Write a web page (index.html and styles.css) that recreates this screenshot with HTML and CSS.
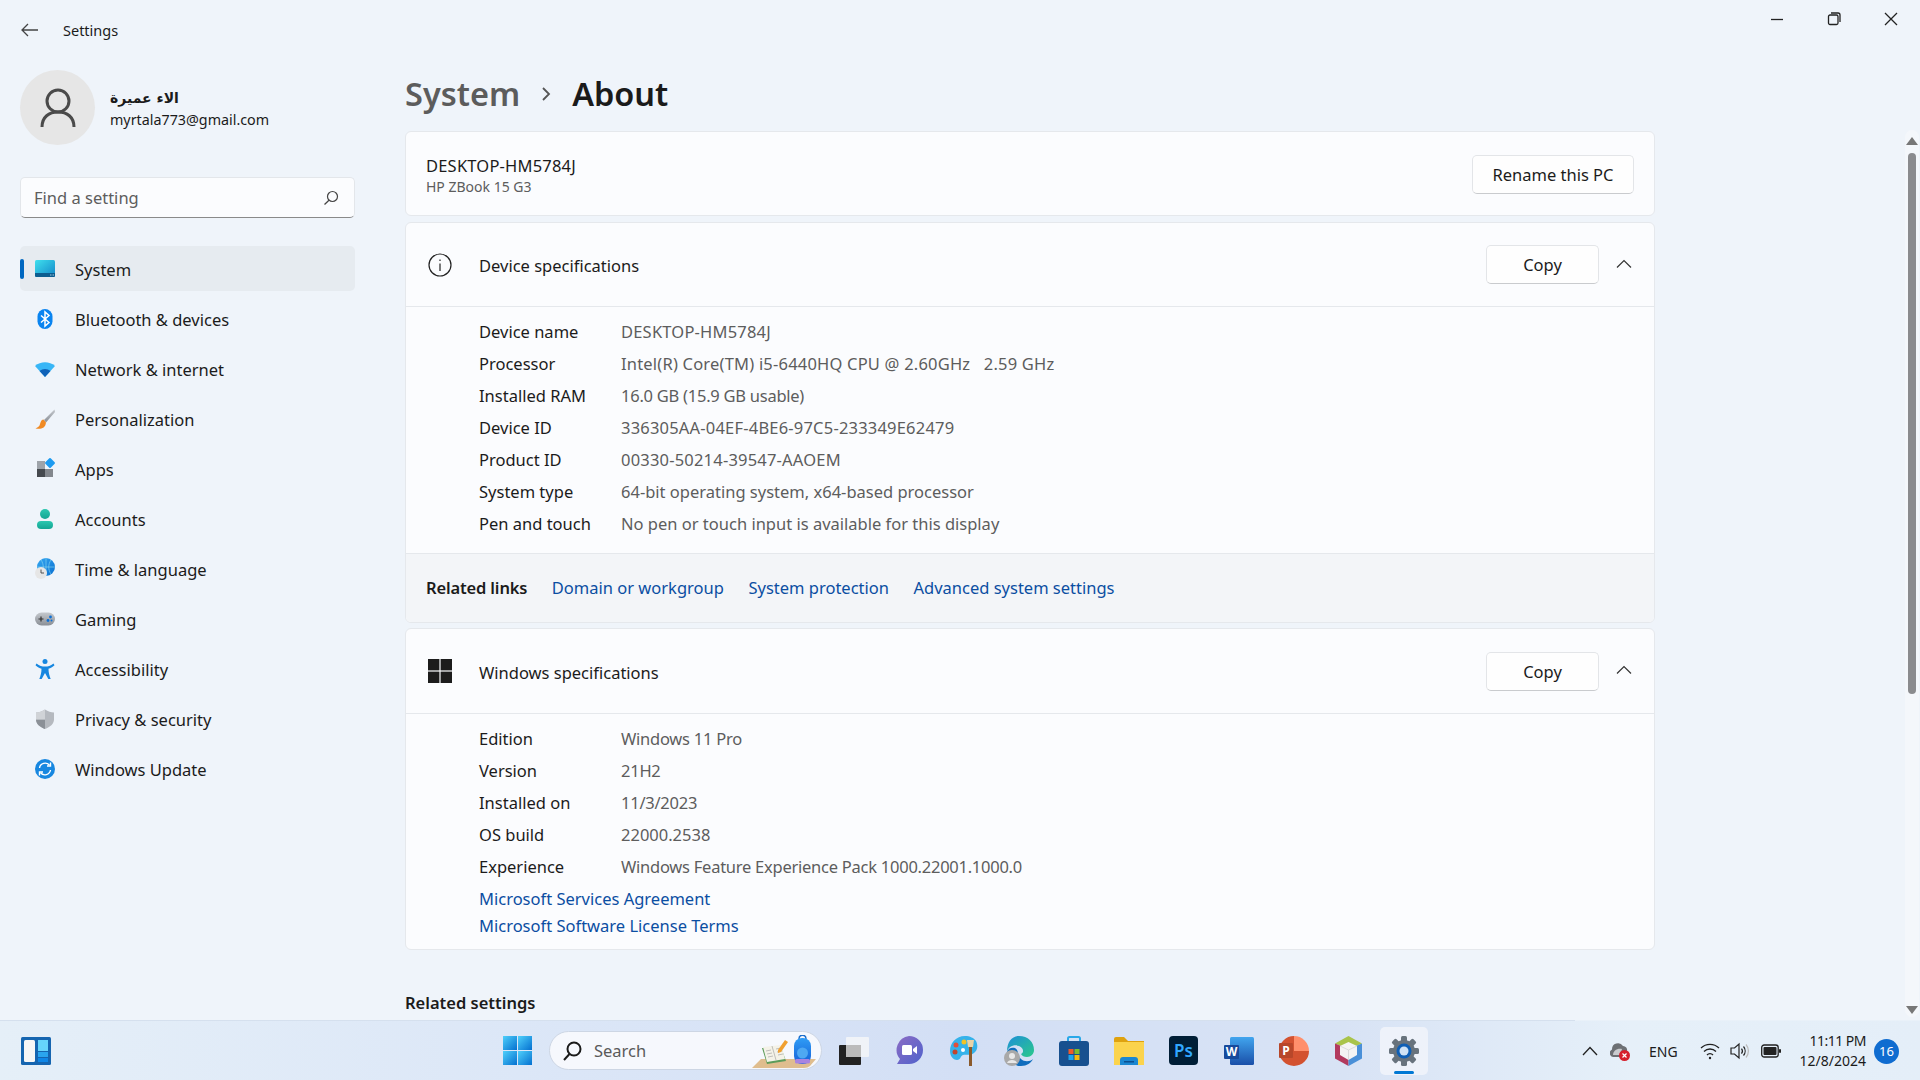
FILE: index.html
```html
<!DOCTYPE html>
<html lang="en">
<head>
  <meta charset="UTF-8" />
  <title>Settings</title>
  <link rel="stylesheet" href="styles.css">
</head>
<body>
  <svg class="defs" width="0" height="0">
    <defs>
      <linearGradient id="g-screen" x1="0" y1="0" x2="1" y2="1"><stop offset="0" stop-color="#3fe0ee"/><stop offset="1" stop-color="#1286c8"/></linearGradient>
      <linearGradient id="g-blue" x1="0" y1="0" x2="1" y2="1"><stop offset="0" stop-color="#35a8f2"/><stop offset="1" stop-color="#0a6fd0"/></linearGradient>
      <linearGradient id="g-win" x1="0" y1="0" x2="1" y2="1"><stop offset="0" stop-color="#4fd0fb"/><stop offset="1" stop-color="#0470d0"/></linearGradient>
      <linearGradient id="g-teal" x1="0" y1="0" x2="0" y2="1"><stop offset="0" stop-color="#2cc7b0"/><stop offset="1" stop-color="#14a593"/></linearGradient>
      <linearGradient id="g-gray" x1="0" y1="0" x2="0" y2="1"><stop offset="0" stop-color="#c4c8cd"/><stop offset="1" stop-color="#8a8f96"/></linearGradient>
      <linearGradient id="g-teams" x1="0" y1="0" x2="1" y2="1"><stop offset="0" stop-color="#8c6cc4"/><stop offset="1" stop-color="#4f62cc"/></linearGradient>
      <linearGradient id="g-edge" x1="0" y1="0" x2="1" y2="1"><stop offset="0" stop-color="#1d8fd8"/><stop offset="1" stop-color="#2bc98a"/></linearGradient>
      <linearGradient id="g-word" x1="0" y1="0" x2="0" y2="1"><stop offset="0" stop-color="#41a5ee"/><stop offset="1" stop-color="#1a4fa8"/></linearGradient>
      <linearGradient id="g-pack" x1="0" y1="0" x2="0" y2="1"><stop offset="0" stop-color="#2f9cf5"/><stop offset="1" stop-color="#1560d8"/></linearGradient>
    </defs>
  </svg>

  <div class="window">
    <header class="titlebar">
      <div class="titlebar-left">
        <svg class="back" width="18" height="14" viewBox="0 0 18 14" fill="none" stroke="#444" stroke-width="1.3"><path d="M1 7h16M7 1 1 7l6 6"/></svg>
        <span class="app-name">Settings</span>
      </div>
      <div class="win-controls">
        <span class="win-btn"><svg width="14" height="14" viewBox="0 0 14 14" stroke="#222" stroke-width="1.3" fill="none"><path d="M1 7.5h12"/></svg></span>
        <span class="win-btn"><svg width="14" height="14" viewBox="0 0 14 14" stroke="#222" stroke-width="1.3" fill="none"><rect x="1.5" y="3" width="9.5" height="9.5" rx="1.5"/><path d="M4 1h7a2 2 0 0 1 2 2v7"/></svg></span>
        <span class="win-btn"><svg width="14" height="14" viewBox="0 0 14 14" stroke="#222" stroke-width="1.3" fill="none"><path d="M1 1l12 12M13 1 1 13"/></svg></span>
      </div>
    </header>

    <div class="columns">
      <aside class="sidebar">
        <div class="profile">
          <div class="avatar">
            <svg width="36" height="40" viewBox="0 0 36 40" fill="none" stroke="#4a4a4a" stroke-width="3"><circle cx="18" cy="13" r="11"/><path d="M2 39c0-10 7-15 16-15s16 5 16 15"/></svg>
          </div>
          <div class="profile-text">
            <div class="profile-name" dir="rtl">الاء عميرة</div>
            <div class="profile-mail">myrtala773@gmail.com</div>
          </div>
        </div>

        <div class="search-box">
          <span>Find a setting</span>
          <svg width="16" height="16" viewBox="0 0 16 16" fill="none" stroke="#444" stroke-width="1.2"><circle cx="9.5" cy="6.5" r="5"/><path d="M6 10.2 1.5 14.5"/></svg>
        </div>

        <nav class="nav">
          <a class="nav-item active">
            <svg class="nav-icon" viewBox="0 0 24 24"><rect x="2" y="3" width="20" height="17" rx="1.5" fill="url(#g-screen)"/><path d="M2 16h20v2.5a1.5 1.5 0 0 1-1.500 1.500H3.500A1.500 1.500 0 0 1 2 18.500z" fill="#0c5d8f"/><path d="M17 18h1.500M19.500 18H21" stroke="#cfeaf5" stroke-width=".8"/></svg>
            <span>System</span>
          </a>
          <a class="nav-item">
            <svg class="nav-icon" viewBox="0 0 24 24"><rect x="4.500" y="2" width="15" height="20" rx="7.500" fill="#0a84f0"/><path d="M8 8.500l8 7-4 3.500V5l4 3.500-8 7" fill="none" stroke="#fff" stroke-width="1.500"/></svg>
            <span>Bluetooth &amp; devices</span>
          </a>
          <a class="nav-item">
            <svg class="nav-icon" viewBox="0 0 24 24"><path d="M2 9c5.500-5 14.500-5 20 0l-10 11z" fill="#38b6f6"/><path d="M6.500 14c3-2.800 8-2.800 11 0L12 20z" fill="#0f62b8"/></svg>
            <span>Network &amp; internet</span>
          </a>
          <a class="nav-item">
            <svg class="nav-icon" viewBox="0 0 24 24"><path d="M21.500 2.500 11 13l2 2.500L22 5z" fill="url(#g-gray)"/><path d="M10.500 12.500c-3 .5-3 4-4 6-.5 1-2 2-4 3 5 1 10 0 10.500-6z" fill="#f08a24"/></svg>
            <span>Personalization</span>
          </a>
          <a class="nav-item">
            <svg class="nav-icon" viewBox="0 0 24 24"><rect x="4" y="4" width="8" height="8" fill="#9ea3a9"/><rect x="4" y="12" width="8" height="8" fill="#45494e"/><rect x="12" y="12" width="8" height="8" fill="#83878d"/><rect x="13.200" y="2.200" width="7.600" height="7.600" rx="1" transform="rotate(45 17 6)" fill="#1e9bf0"/></svg>
            <span>Apps</span>
          </a>
          <a class="nav-item">
            <svg class="nav-icon" viewBox="0 0 24 24"><circle cx="12" cy="7" r="5" fill="url(#g-teal)"/><rect x="4" y="14" width="16" height="8" rx="4" fill="url(#g-teal)"/></svg>
            <span>Accounts</span>
          </a>
          <a class="nav-item">
            <svg class="nav-icon" viewBox="0 0 24 24"><circle cx="13" cy="10" r="9" fill="url(#g-blue)"/><path d="M13 1v18M4 10h18M8 3c3 4 3 10 0 14M18 3c-3 4-3 10 0 14" stroke="#8edcf2" stroke-width=".6" fill="none"/><circle cx="8" cy="16" r="6" fill="#e6e6e6"/><path d="M8 12.500V16h3" stroke="#444" stroke-width=".9" fill="none"/></svg>
            <span>Time &amp; language</span>
          </a>
          <a class="nav-item">
            <svg class="nav-icon" viewBox="0 0 24 24"><rect x="2" y="5.500" width="20" height="13" rx="6.500" fill="url(#g-gray)"/><path d="M5.500 12h5M8 9.500v5" stroke="#333" stroke-width="1.200"/><circle cx="17.500" cy="10" r="1.400" fill="#0b6fd6"/><circle cx="15" cy="13.500" r="1.400" fill="#0b6fd6"/><circle cx="18.500" cy="13.500" r="1" fill="#0b6fd6"/></svg>
            <span>Gaming</span>
          </a>
          <a class="nav-item">
            <svg class="nav-icon" viewBox="0 0 24 24"><circle cx="12" cy="4.500" r="2.500" fill="#1787e0"/><path d="M3.500 6.500c3 2.500 5.500 3 8.500 3s5.500-.5 8.500-3l1 1.700c-2 1.800-4 3-6 3.600 0 4 1 7.500 2.200 10.200h-2.400L12 16l-3.300 6H6.300c1.200-2.700 2.200-6.200 2.200-10.200-2-.6-4-1.800-6-3.600z" fill="#1787e0"/></svg>
            <span>Accessibility</span>
          </a>
          <a class="nav-item">
            <svg class="nav-icon" viewBox="0 0 24 24"><path d="M12 2.500c3 2 6 2.800 9 3v7c0 4.500-4 7.500-9 9.500-5-2-9-5-9-9.500v-7c3-.2 6-1 9-3z" fill="#b5b9bf"/><path d="M12 2.500v19.500c-5-2-9-5-9-9.500h9z" fill="#8b9097"/><path d="M12 2.500c-3 2-6 2.800-9 3v7h9z" fill="#d0d3d7"/></svg>
            <span>Privacy &amp; security</span>
          </a>
          <a class="nav-item">
            <svg class="nav-icon" viewBox="0 0 24 24"><circle cx="12" cy="12" r="10" fill="#1787e0"/><path d="M6.500 11a5.700 5.700 0 0 1 10-2.800M17.500 13a5.700 5.700 0 0 1-10 2.800" fill="none" stroke="#fff" stroke-width="1.400"/><path d="M17.500 5.500v3.500H14M6.500 18.500V15H10" fill="none" stroke="#fff" stroke-width="1.400"/></svg>
            <span>Windows Update</span>
          </a>
        </nav>
      </aside>

      <main class="content">
        <div class="page">
          <h1 class="breadcrumb">
            <span class="crumb-parent">System</span>
            <svg width="12" height="16" viewBox="0 0 12 16" fill="none" stroke="#555" stroke-width="1.800"><path d="M3 2l6 6-6 6"/></svg>
            <span class="crumb-current">About</span>
          </h1>

          <section class="card pc-card">
            <div>
              <div class="pc-name">DESKTOP-HM5784J</div>
              <div class="pc-model">HP ZBook 15 G3</div>
            </div>
            <button class="btn rename">Rename this PC</button>
          </section>

          <section class="card spec-card">
            <div class="card-head">
              <svg class="head-icon" width="24" height="24" viewBox="0 0 24 24" fill="none" stroke="#222" stroke-width="1.200"><circle cx="12" cy="12" r="11"/><path d="M12 10.500V18M12 6.500v1.500"/></svg>
              <span class="head-title">Device specifications</span>
              <button class="btn copy">Copy</button>
              <svg class="chevron" width="16" height="10" viewBox="0 0 16 10" fill="none" stroke="#333" stroke-width="1.200"><path d="M1 8.500l7-7 7 7"/></svg>
            </div>
            <div class="spec-body">
              <div class="spec-row"><span class="spec-key">Device name</span><span class="spec-val wide">DESKTOP-HM5784J</span></div>
              <div class="spec-row"><span class="spec-key">Processor</span><span class="spec-val wide">Intel(R) Core(TM) i5-6440HQ CPU @ 2.60GHz &nbsp; 2.59 GHz</span></div>
              <div class="spec-row"><span class="spec-key">Installed RAM</span><span class="spec-val tight">16.0 GB (15.9 GB usable)</span></div>
              <div class="spec-row"><span class="spec-key">Device ID</span><span class="spec-val wide">336305AA-04EF-4BE6-97C5-233349E62479</span></div>
              <div class="spec-row"><span class="spec-key">Product ID</span><span class="spec-val wide">00330-50214-39547-AAOEM</span></div>
              <div class="spec-row"><span class="spec-key">System type</span><span class="spec-val">64-bit operating system, x64-based processor</span></div>
              <div class="spec-row"><span class="spec-key">Pen and touch</span><span class="spec-val">No pen or touch input is available for this display</span></div>
            </div>
            <div class="related">
              <strong>Related links</strong>
              <a class="link">Domain or workgroup</a>
              <a class="link">System protection</a>
              <a class="link">Advanced system settings</a>
            </div>
          </section>

          <section class="card spec-card">
            <div class="card-head win-head">
              <svg class="head-icon" width="24" height="24" viewBox="0 0 24 24" fill="#1c1c1c"><rect width="11.400" height="11.400"/><rect x="12.600" width="11.400" height="11.400"/><rect y="12.600" width="11.400" height="11.400"/><rect x="12.600" y="12.600" width="11.400" height="11.400"/></svg>
              <span class="head-title">Windows specifications</span>
              <button class="btn copy">Copy</button>
              <svg class="chevron" width="16" height="10" viewBox="0 0 16 10" fill="none" stroke="#333" stroke-width="1.200"><path d="M1 8.500l7-7 7 7"/></svg>
            </div>
            <div class="spec-body win-body">
              <div class="spec-row"><span class="spec-key">Edition</span><span class="spec-val tight">Windows 11 Pro</span></div>
              <div class="spec-row"><span class="spec-key">Version</span><span class="spec-val tight">21H2</span></div>
              <div class="spec-row"><span class="spec-key">Installed on</span><span class="spec-val tight">11/3/2023</span></div>
              <div class="spec-row"><span class="spec-key">OS build</span><span class="spec-val">22000.2538</span></div>
              <div class="spec-row"><span class="spec-key">Experience</span><span class="spec-val tight">Windows Feature Experience Pack 1000.22001.1000.0</span></div>
              <a class="link terms first">Microsoft Services Agreement</a>
              <a class="link terms">Microsoft Software License Terms</a>
            </div>
          </section>

          <h2 class="related-settings">Related settings</h2>
        </div>

        <div class="scrollbar">
          <svg width="12" height="8" viewBox="0 0 12 8" fill="#777"><path d="M6 0l6 8H0z"/></svg>
          <div class="scroll-track"><div class="scroll-thumb"></div></div>
          <svg width="12" height="8" viewBox="0 0 12 8" fill="#777"><path d="M6 8 0 0h12z"/></svg>
        </div>
      </main>
    </div>
  </div>

  <footer class="taskbar">
    <svg class="widgets" width="30" height="28" viewBox="0 0 30 28"><rect width="30" height="28" rx="1.500" fill="#1565b0"/><rect x="3" y="3" width="11" height="22" rx="1.500" fill="#f6f6f6"/><rect x="17" y="3" width="10" height="11" fill="#66d4fb"/><rect x="17" y="15" width="10" height="5" fill="#2aa5ee"/><rect x="17" y="21" width="10" height="4" fill="#0f86e6"/></svg>

    <div class="task-center">
      <svg class="start" width="29" height="29" viewBox="0 0 29 29"><rect width="14" height="14" fill="url(#g-win)"/><rect x="15" width="14" height="14" fill="url(#g-win)"/><rect y="15" width="14" height="14" fill="url(#g-win)"/><rect x="15" y="15" width="14" height="14" fill="url(#g-win)"/></svg>

      <div class="task-search">
        <svg width="22" height="22" viewBox="0 0 22 22" fill="none" stroke="#1a1a1a" stroke-width="2"><circle cx="13" cy="9" r="6.500"/><path d="M8.500 14 3 20"/></svg>
        <span>Search</span>
        <svg class="search-art" width="64" height="34" viewBox="0 0 64 34">
          <path d="M0 33l9-9h55l-6 7q-2 2-6 2z" fill="#dfbd8e"/>
          <path d="M10 13l19-1 5 14-19 3z" fill="#5c9c5a"/>
          <path d="M11 12l18-2 4 14-18 3z" fill="#f4f2e8"/>
          <path d="M20 11l4 14M14 16l5-1M15 19l5-1M16 22l5-1M24 14l5-1M25 17l5-1M26 20l5-1" stroke="#9a9a9a" stroke-width=".6"/>
          <path d="M26 15l7-10 3 2-7 10-3 1z" fill="#f0a030"/>
          <path d="M47 4c0-5 7-5 7 0" fill="none" stroke="#1c6ecc" stroke-width="1.500"/>
          <rect x="42" y="3" width="17" height="26" rx="8" fill="url(#g-pack)"/>
          <circle cx="50.500" cy="18" r="5.500" fill="#4ea8f2"/>
          <rect x="43" y="24" width="15" height="4.500" rx="1.500" fill="#a884e0"/>
        </svg>
      </div>

      <div class="task-apps">
        <span class="task-slot"><svg width="30" height="28" viewBox="0 0 30 28"><rect y="8" width="22" height="20" rx="1" fill="#222"/><rect x="7" width="23" height="20" rx="1" fill="#f2f4f7" opacity=".92"/><rect x="7" y="8" width="15" height="12" fill="#bbb"/></svg></span>
        <span class="task-slot"><svg width="28" height="30" viewBox="0 0 28 30"><path d="M14 0a14 14 0 0 1 0 28H2l3-5A14 14 0 0 1 14 0z" fill="url(#g-teams)"/><rect x="7" y="9" width="10" height="10" rx="1.500" fill="#fff"/><path d="M18 13l4-3v8l-4-3z" fill="#fff"/></svg></span>
        <span class="task-slot"><svg width="28" height="30" viewBox="0 0 28 30"><path d="M15 0C6 0 0 7 0 15c0 6 4 9 7 9 4 0 3-4 6-5 3-1 7 1 11-2 4-3 4-8 2-12-2-3-6-5-11-5z" fill="#35b2ea"/><circle cx="14" cy="6" r="2.500" fill="#f2c326"/><circle cx="6" cy="9" r="2.500" fill="#e24f3a"/><circle cx="5" cy="16" r="2.500" fill="#c1442c"/><circle cx="13" cy="14" r="2" fill="#fff"/><rect x="19" y="10" width="3" height="20" fill="#8b5a2b"/><path d="M17 4h7l-1 7h-5z" fill="#e8d3a8"/></svg></span>
        <span class="task-slot"><svg width="30" height="30" viewBox="0 0 30 30"><path d="M15 0c9 0 15 6 15 14 0 4-3 7-7 7-3 0-5-1-6-3 3-1 3-6-2-8-5-2-11 1-12 6C3 6 8 0 15 0z" fill="url(#g-edge)"/><path d="M3 16c0 8 6 14 14 14 6 0 10-3 12-7-3 3-9 3-12 0-4-4-2-9-6-11-3-1-7 0-8 4z" fill="#0f6cbd"/><circle cx="8" cy="22" r="8" fill="#a9a9a9"/><circle cx="8" cy="20" r="3" fill="#e8e8e8"/><path d="M3 27c1-4 9-4 10 0z" fill="#e8e8e8"/></svg></span>
        <span class="task-slot"><svg width="30" height="30" viewBox="0 0 30 30"><path d="M9 5V2.500A1.500 1.500 0 0 1 10.500 1h9A1.500 1.500 0 0 1 21 2.500V5" fill="none" stroke="#29a8e8" stroke-width="2"/><rect y="5" width="30" height="25" rx="3" fill="#17508f"/><rect x="9.500" y="13" width="5" height="5" fill="#ef5a29"/><rect x="15.500" y="13" width="5" height="5" fill="#7cbb2e"/><rect x="9.500" y="19" width="5" height="5" fill="#1ea5ee"/><rect x="15.500" y="19" width="5" height="5" fill="#f5b90f"/></svg></span>
        <span class="task-slot"><svg width="30" height="28" viewBox="0 0 30 28"><path d="M0 2a2 2 0 0 1 2-2h8l4 4h16v6H0z" fill="#dfa20f"/><rect y="5" width="30" height="23" fill="#fbd34c"/><path d="M6 28v-5a3 3 0 0 1 3-3h12a3 3 0 0 1 3 3v5z" fill="#1b87d1"/><rect x="10" y="24" width="10" height="1.500" fill="#0b4f8f"/></svg></span>
        <span class="task-slot"><svg width="29" height="29" viewBox="0 0 29 29"><rect width="29" height="29" rx="4" fill="#001e36"/><text x="14.500" y="21" text-anchor="middle" class="ps-text">Ps</text></svg></span>
        <span class="task-slot"><svg width="30" height="28" viewBox="0 0 30 28"><rect x="6" width="24" height="28" rx="1.500" fill="url(#g-word)"/><rect y="8" width="15" height="14" rx="1" fill="#174a9c"/><text x="7.500" y="19" text-anchor="middle" class="word-text">W</text></svg></span>
        <span class="task-slot"><svg width="30" height="30" viewBox="0 0 30 30"><path d="M15 0a15 15 0 0 1 15 15H15z" fill="#ff8f6b"/><path d="M30 15a15 15 0 0 1-30 0 15 15 0 0 1 15-15v15z" fill="#d35230"/><rect y="7" width="14" height="15" rx="1" fill="#b7472a"/><text x="7" y="19" text-anchor="middle" class="word-text">P</text></svg></span>
        <span class="task-slot"><svg width="27" height="30" viewBox="0 0 27 30"><path d="M13.500 0 27 7.500 13.500 13 0 7.500z" fill="#a9c44a"/><path d="M0 7.500 13.500 13v17L0 22.500z" fill="#b23a5e"/><path d="M27 7.500 13.500 13v17L27 22.500z" fill="#4a90d8"/><path d="M13.500 6 22 10v9l-8.500 5L5 19v-9z" fill="#f4f4f4"/><path d="M13.500 14 22 10M13.500 14 5 10M13.500 14v10" stroke="#d0d0d0" stroke-width=".7"/></svg></span>
        <span class="task-slot settings-app">
          <svg width="30" height="30" viewBox="0 0 30 30">
            <g fill="#68737d"><rect x="12" y="0" width="6" height="30" rx="1.500"/><rect x="12" y="0" width="6" height="30" rx="1.500" transform="rotate(45 15 15)"/><rect x="12" y="0" width="6" height="30" rx="1.500" transform="rotate(90 15 15)"/><rect x="12" y="0" width="6" height="30" rx="1.500" transform="rotate(135 15 15)"/></g>
            <circle cx="15" cy="15" r="11" fill="#68737d"/><circle cx="15" cy="15" r="7.500" fill="#0f5fb5"/><circle cx="15" cy="15" r="4.500" fill="#cfe2f5"/>
          </svg>
          <i class="running"></i>
        </span>
      </div>
    </div>

    <div class="tray">
      <svg class="tray-chevron" width="16" height="10" viewBox="0 0 16 10" fill="none" stroke="#222" stroke-width="1.300"><path d="M1 9l7-7.500L15 9"/></svg>
      <svg class="tray-cloud" width="20" height="20" viewBox="0 0 20 20"><path d="M3 16a4 4 0 0 1-1-7.500A6 6 0 0 1 13 5a4 4 0 0 1 4 5v6z" fill="#6d7074"/><path d="M3 14c0-4 4-7 9-6l-2 6z" fill="#c9cbce"/><circle cx="14.500" cy="14.500" r="5.500" fill="#d6202c"/><path d="M12.500 12.500l4 4M16.500 12.500l-4 4" stroke="#fff" stroke-width="1.200"/></svg>
      <span class="tray-lang">ENG</span>
      <svg class="tray-wifi" width="20" height="18" viewBox="0 0 20 18" fill="none" stroke="#222" stroke-width="1.300"><path d="M1 6a13 13 0 0 1 18 0M4 9.500a8.500 8.500 0 0 1 12 0M7 13a4 4 0 0 1 6 0"/><circle cx="10" cy="16" r="1.200" fill="#222" stroke="none"/></svg>
      <svg class="tray-sound" width="19" height="18" viewBox="0 0 19 18" fill="none" stroke="#222" stroke-width="1.200"><path d="M1 6h3.500L9 2v14l-4.500-4H1z"/><path d="M11.500 6.500a4 4 0 0 1 0 5M13.500 4.500a7 7 0 0 1 0 9"/><path d="M16 2.500a10 10 0 0 1 0 13" stroke="#bbb"/></svg>
      <svg class="tray-battery" width="20" height="14" viewBox="0 0 20 14"><rect x=".7" y="1" width="16.500" height="12" rx="2.500" fill="none" stroke="#222" stroke-width="1.300"/><rect x="2.500" y="3" width="13" height="8" rx="1" fill="#222"/><rect x="18" y="5" width="2" height="4" rx="1" fill="#222"/></svg>
      <div class="clock">
        <div class="clock-time">11:11 PM</div>
        <div>12/8/2024</div>
      </div>
      <span class="badge">16</span>
    </div>
  </footer>
</body>
</html>
```

FILE: styles.css
```css
* {
  box-sizing: border-box;
}
body {
  margin: 0;
  width: 1920px;
  height: 1080px;
  display: flex;
  flex-direction: column;
  overflow: hidden;
  font-family: "Noto Sans", "DejaVu Sans", sans-serif;
  font-size: 16.5px;
  color: #1b1b1b;
  background: #eff4fa;
}
a {
  text-decoration: none;
}
.defs {
  position: absolute;
}

/* window */
.window {
  height: 1020px;
  display: flex;
  flex-direction: column;
  overflow: hidden;
}
.titlebar {
  height: 60px;
  flex: none;
  display: flex;
  justify-content: space-between;
}
.titlebar-left {
  display: flex;
  align-items: center;
  gap: 24px;
  padding-left: 21px;
  height: 60px;
}
.app-name {
  font-size: 14.5px;
}
.win-controls {
  display: flex;
  padding: 12px 22px 0 0;
  gap: 43px;
}
.win-btn {
  width: 14px;
  height: 14px;
  display: block;
}
.win-btn svg {
  display: block;
}
.columns {
  flex: 1;
  display: flex;
  min-height: 0;
}

/* sidebar */
.sidebar {
  width: 405px;
  flex: none;
  padding: 10px 50px 0 20px;
}
.profile {
  display: flex;
  align-items: center;
  gap: 15px;
  height: 75px;
}
.avatar {
  width: 75px;
  height: 75px;
  border-radius: 50%;
  background: #e6e6e6;
  display: flex;
  align-items: center;
  justify-content: center;
}
.profile-text {
  padding-top: 2px;
}
.profile-name {
  font-family: "DejaVu Sans", sans-serif;
  font-weight: bold;
  font-size: 14px;
  line-height: 21px;
  text-align: left;
  white-space: nowrap;
}
.profile-mail {
  font-size: 14.3px;
  line-height: 21px;
}
.search-box {
  height: 41px;
  margin-top: 32px;
  background: #fbfcfe;
  border: 1px solid #e3e6ea;
  border-bottom: 1px solid #8a8a8a;
  border-radius: 5px;
  display: flex;
  align-items: center;
  justify-content: space-between;
  padding: 0 15px 0 13px;
  color: #5d5d5d;
}
.nav {
  margin-top: 28px;
  display: flex;
  flex-direction: column;
  gap: 5px;
}
.nav-item {
  position: relative;
  height: 45px;
  display: flex;
  align-items: center;
  gap: 18px;
  padding-left: 13px;
  border-radius: 5px;
  color: #1b1b1b;
}
.nav-item span {
  padding-top: 1px;
}
.nav-item.active {
  background: #e6ebf0;
}
.nav-item.active::before {
  content: "";
  position: absolute;
  left: 0;
  top: 13px;
  width: 4px;
  height: 20px;
  border-radius: 2px;
  background: #0067c0;
}
.nav-icon {
  width: 24px;
  height: 24px;
}

/* content */
.content {
  flex: 1;
  display: flex;
  min-width: 0;
}
.page {
  width: 1250px;
  flex: none;
}
.breadcrumb {
  margin: 0;
  height: 71px;
  display: flex;
  align-items: center;
  gap: 20px;
  padding-bottom: 4px;
  font-size: 32.5px;
  font-weight: 600;
}
.crumb-parent {
  color: #5c5c5c;
}
.crumb-current {
  color: #1a1a1a;
}
.card {
  background: #fbfcfe;
  border: 1px solid #e5e8ec;
  border-radius: 6px;
}
.pc-card {
  height: 85px;
  display: flex;
  align-items: center;
  justify-content: space-between;
  padding: 2px 20px 0;
  margin-bottom: 6px;
}
.pc-name {
  line-height: 23px;
  letter-spacing: .2px;
}
.pc-model {
  font-size: 14px;
  line-height: 19px;
  color: #5d5d5d;
}
.btn {
  height: 39px;
  background: #fefefe;
  border: 1px solid #e3e5e8;
  border-bottom-color: #c9cbce;
  border-radius: 5px;
  font: inherit;
  color: #1b1b1b;
  padding: 0;
}
.rename {
  width: 162px;
}
.spec-card {
  margin-bottom: 5px;
  overflow: hidden;
}
.card-head {
  height: 84px;
  display: flex;
  align-items: center;
  padding: 0 21px 0 22px;
  border-bottom: 1px solid #e5e8ec;
}
.win-head {
  height: 85px;
}
.head-icon {
  margin-right: 27px;
}
.head-title {
  flex: 1;
  padding-top: 2px;
}
.copy {
  width: 113px;
}
.chevron {
  margin: 0 1px 2px 17px;
}
.spec-body {
  padding: 8px 0 14px 73px;
  border-bottom: 1px solid #e5e8ec;
}
.win-body {
  padding: 8px 0 10px 73px;
  border-bottom: 0;
}
.spec-row {
  display: flex;
  height: 32px;
  align-items: center;
}
.spec-key {
  width: 142px;
  flex: none;
}
.spec-val {
  color: #5d5d5d;
}
.wide {
  letter-spacing: .2px;
}
.tight {
  letter-spacing: -.25px;
}
.related {
  height: 68px;
  display: flex;
  align-items: center;
  gap: 24.5px;
  padding: 0 0 1px 20px;
  background: #f3f5f8;
}
.related strong {
  font-weight: 600;
  letter-spacing: -.15px;
}
.link {
  color: #0b4ea2;
}
.terms {
  display: block;
  height: 27px;
  line-height: 27px;
}
.terms.first {
  margin-top: 3px;
}
.related-settings {
  margin: 41px 0 0;
  font-size: 16.5px;
  font-weight: 600;
  line-height: 24px;
}

/* scrollbar */
.scrollbar {
  margin: 70px 1px 0 auto;
  width: 14px;
  height: 887px;
  display: flex;
  flex-direction: column;
  align-items: center;
  background: #f4f7fb;
  border-radius: 7px;
  padding: 7px 0 3px;
}
.scroll-track {
  flex: 1;
  padding-top: 8px;
}
.scroll-thumb {
  width: 8px;
  height: 541px;
  border-radius: 4px;
  background: #8a8b8e;
}

/* taskbar */
.taskbar {
  height: 60px;
  flex: none;
  position: relative;
  display: flex;
  align-items: center;
  padding-left: 21px;
  border-top: 1px solid #d5e0ee;
  border-image: linear-gradient(90deg, #d5e0ee 82%, #e9f1f9 82%) 1;
  background: linear-gradient(90deg, #e5eff8 0%, #dbe6f7 30%, #d3dff5 50%, #d8e3f5 70%, #e6f0f9 85%, #e4eef8 100%);
}
.task-center {
  display: flex;
  align-items: center;
  margin-left: 452px;
}
.start {
  margin-right: 17px;
}
.task-search {
  width: 273px;
  height: 39px;
  border-radius: 20px;
  background: #f6f8fd;
  border: 1px solid #cdd6e4;
  display: flex;
  align-items: center;
  gap: 11px;
  padding-left: 11px;
  position: relative;
  color: #5a5a5a;
  font-size: 16.5px;
}
.search-art {
  position: absolute;
  right: 5px;
  bottom: 0;
}
.task-apps {
  display: flex;
  margin-left: 4px;
}
.task-slot {
  width: 55px;
  height: 48px;
  display: flex;
  align-items: center;
  justify-content: center;
  position: relative;
}
.ps-text {
  font-family: "Noto Sans", sans-serif;
  font-weight: 600;
  font-size: 17px;
  fill: #31a8ff;
}
.word-text {
  font-family: "Noto Sans", sans-serif;
  font-weight: 700;
  font-size: 12px;
  fill: #fff;
}
.settings-app {
  width: 48px;
  margin-left: 4px;
  border-radius: 5px;
  background: #eef2fa;
}
.running {
  position: absolute;
  left: 14px;
  bottom: 1px;
  width: 20px;
  height: 3px;
  border-radius: 2px;
  background: #0078d4;
}
.tray {
  position: absolute;
  right: 0;
  top: 0;
  height: 60px;
  width: 340px;
  display: flex;
  align-items: center;
  font-size: 14px;
}
.tray-chevron {
  margin-left: 2px;
}
.tray-cloud {
  margin-left: 12px;
}
.tray-lang {
  margin-left: 19px;
  width: 28px;
}
.tray-wifi {
  margin-left: 23px;
}
.tray-sound {
  margin-left: 10px;
}
.tray-battery {
  margin-left: 12px;
}
.clock {
  width: 85px;
  text-align: right;
  line-height: 20px;
  font-size: 14px;
}
.clock-time {
  letter-spacing: -.5px;
}
.badge {
  width: 25px;
  height: 25px;
  margin-left: 8px;
  border-radius: 50%;
  background: #0f6cd0;
  color: #fff;
  font-size: 13px;
  display: flex;
  align-items: center;
  justify-content: center;
}
```
